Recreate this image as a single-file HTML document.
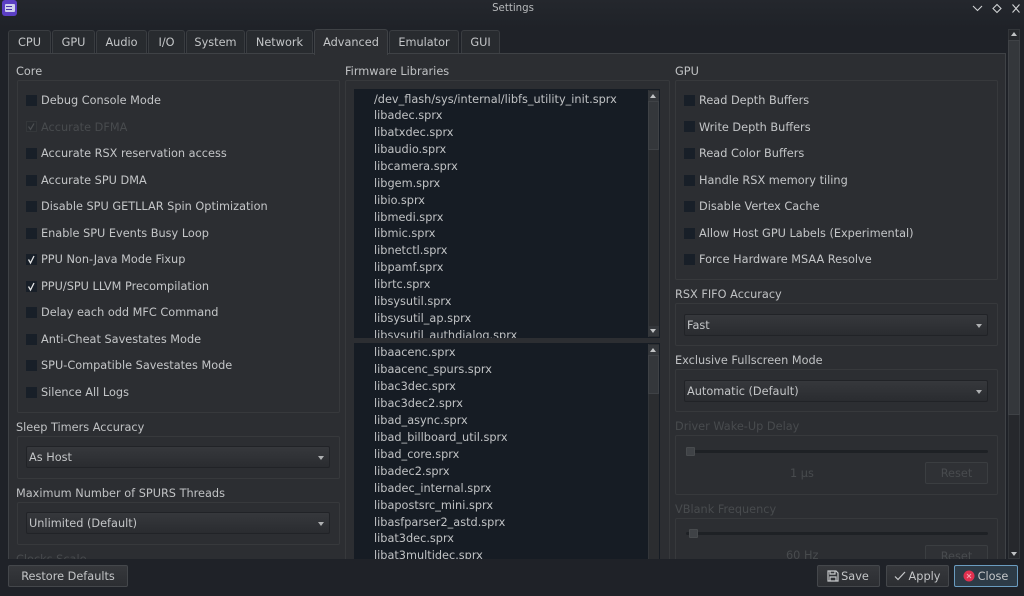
<!DOCTYPE html>
<html><head><meta charset="utf-8"><style>
html,body{margin:0;padding:0;width:1024px;height:596px;overflow:hidden;background:#1f2228}
body{font-family:"DejaVu Sans","Liberation Sans",sans-serif;font-size:11.3px;color:#c4c6c8;position:relative}
div,span{position:absolute;box-sizing:border-box;white-space:nowrap}
.tab{top:30px;height:24px;background:#282b2f;border:1px solid #3a3d41;border-bottom:none;border-radius:3px 3px 0 0;text-align:center;line-height:24px}
.gb{border:1px solid #37393c;border-radius:2px}
.l{line-height:16px;height:16px;margin-top:1px;color:#c0c2c4}
.cb{width:11px;height:11px;background:#181f28}
.cb svg{position:absolute;left:0;top:0}
.t{line-height:16px;height:16px;margin-top:1px;color:#c4c6c8}
.d{color:#484b4e !important}
.combo{height:22px;background:linear-gradient(#36383c,#2a2c30);border:1px solid #212327;border-radius:2px;line-height:21px;padding-left:2px;color:#c4c6c8}
.combo:after{content:"";position:absolute;right:5px;top:9px;border:3.5px solid transparent;border-top:4px solid #aeb0b2;border-bottom:0}
.list{background:#161c24;overflow:hidden}
.i{left:20px;line-height:17px;height:17px;color:#c0c2c4}
.sb{background:#2b2d30;border-left:1px solid #33363a}
.btn{height:22px;background:linear-gradient(#36383c,#2c2e32);border:1px solid #44474b;border-radius:2px;line-height:21px;color:#c4c6c8;text-align:center}
.dbtn{height:22px;background:#2f3135;border:1px solid #3b3e41;border-radius:2px;line-height:21px;color:#484b4e;text-align:center}
.up,.dn{width:0;height:0;border:3.5px solid transparent}
.up{border-bottom:4px solid #c0c2c4;border-top:0}
.dn{border-top:4px solid #c0c2c4;border-bottom:0}
.bx{width:11px;height:10px;background:#34373b}
</style></head><body>

<div style="left:0;top:0;width:1024px;height:29px;background:linear-gradient(#24272d,#1f2228)"></div>
<div style="left:2px;top:0;width:15px;height:16px;background:#5b3fc4;border-radius:3px"></div>
<div style="left:5px;top:4px;width:10px;height:8px;background:#cfd0ee;border-radius:1px"></div>
<div style="left:6px;top:6px;width:6px;height:1px;background:#4a35a8"></div>
<div style="left:6px;top:9px;width:6px;height:1px;background:#4a35a8"></div>
<div style="left:1px;top:1px;width:1024px;height:16px;line-height:16px;text-align:center;color:#b8babc;font-size:10.2px">Settings</div>
<svg style="position:absolute;left:970px;top:1px" width="54" height="16" fill="none" stroke="#d0d2d4" stroke-width="1.1"><path d="M3 5l4.500 4.500L12 5"/><path d="M27 3.500l4 4-4 4-4-4z"/><path d="M42.500 3.500l7 8M49.500 3.500l-7 8"/></svg>

<div class="tab" style="left:8px;width:43px">CPU</div>
<div class="tab" style="left:52px;width:43px">GPU</div>
<div class="tab" style="left:96px;width:51px">Audio</div>
<div class="tab" style="left:148px;width:37px">I/O</div>
<div class="tab" style="left:186px;width:59px">System</div>
<div class="tab" style="left:246px;width:67px">Network</div>
<div class="tab" style="left:389px;width:70px">Emulator</div>
<div class="tab" style="left:461px;width:39px">GUI</div>

<div style="left:8px;top:53px;width:998px;height:510px;background:#2c2e32;border:1px solid #3f4246"></div>
<div class="tab" style="left:314px;top:29px;width:74px;height:26px;background:#2c2e32;border-color:#3f4246;z-index:2;line-height:26px">Advanced</div>

<!-- outer scrollbar -->
<div style="left:1008px;top:29px;width:12px;height:530px;background:#26282c;border:1px solid #33363a"></div>
<div style="left:1008px;top:40px;width:12px;height:375px;background:#34373b;border:1px solid #3f4246"></div>
<div class="up" style="left:1010.500px;top:32px"></div>
<div class="dn" style="left:1010.500px;top:552px"></div>

<!-- Core -->
<div class="l" style="left:16px;top:63px">Core</div>
<div class="gb" style="left:17px;top:80px;width:323px;height:333px"></div>
<div class="cb" style="left:26px;top:95px"></div><div class="t" style="left:41px;top:92px">Debug Console Mode</div>
<div class="cb" style="left:26px;top:121px;background:#292c30;border:1px solid #34373a"><svg width="9" height="9" fill="none" stroke="#4c4f52" stroke-width="1.200"><path d="M1.500 4.500l2 3 3.500-6"/></svg></div><div class="t d" style="left:41px;top:119px">Accurate DFMA</div>
<div class="cb" style="left:26px;top:148px"></div><div class="t" style="left:41px;top:145px">Accurate RSX reservation access</div>
<div class="cb" style="left:26px;top:175px"></div><div class="t" style="left:41px;top:172px">Accurate SPU DMA</div>
<div class="cb" style="left:26px;top:201px"></div><div class="t" style="left:41px;top:198px">Disable SPU GETLLAR Spin Optimization</div>
<div class="cb" style="left:26px;top:228px"></div><div class="t" style="left:41px;top:225px">Enable SPU Events Busy Loop</div>
<div class="cb" style="left:26px;top:254px"><svg width="11" height="11" fill="none" stroke="#e4e5e6" stroke-width="1.300"><path d="M2.500 5.500l2 3.500 3.500-7"/></svg></div><div class="t" style="left:41px;top:251px">PPU Non-Java Mode Fixup</div>
<div class="cb" style="left:26px;top:281px"><svg width="11" height="11" fill="none" stroke="#e4e5e6" stroke-width="1.300"><path d="M2.500 5.500l2 3.500 3.500-7"/></svg></div><div class="t" style="left:41px;top:278px">PPU/SPU LLVM Precompilation</div>
<div class="cb" style="left:26px;top:307px"></div><div class="t" style="left:41px;top:304px">Delay each odd MFC Command</div>
<div class="cb" style="left:26px;top:334px"></div><div class="t" style="left:41px;top:331px">Anti-Cheat Savestates Mode</div>
<div class="cb" style="left:26px;top:360px"></div><div class="t" style="left:41px;top:357px">SPU-Compatible Savestates Mode</div>
<div class="cb" style="left:26px;top:387px"></div><div class="t" style="left:41px;top:384px">Silence All Logs</div>

<div class="l" style="left:16px;top:419px">Sleep Timers Accuracy</div>
<div class="gb" style="left:17px;top:436px;width:323px;height:43px"></div>
<div class="combo" style="left:26px;top:446px;width:304px">As Host</div>
<div class="l" style="left:16px;top:485px">Maximum Number of SPURS Threads</div>
<div class="gb" style="left:17px;top:502px;width:323px;height:43px"></div>
<div class="combo" style="left:26px;top:512px;width:304px">Unlimited (Default)</div>
<div class="l d" style="left:16px;top:551px">Clocks Scale</div>

<!-- Firmware -->
<div class="l" style="left:345px;top:63px">Firmware Libraries</div>
<div class="gb" style="left:345px;top:80px;width:325px;height:490px"></div>
<div class="list" style="left:354px;top:89px;width:306px;height:249px">
<div class="i" style="top:2px">/dev_flash/sys/internal/libfs_utility_init.sprx</div>
<div class="i" style="top:18px">libadec.sprx</div>
<div class="i" style="top:35px">libatxdec.sprx</div>
<div class="i" style="top:52px">libaudio.sprx</div>
<div class="i" style="top:69px">libcamera.sprx</div>
<div class="i" style="top:86px">libgem.sprx</div>
<div class="i" style="top:103px">libio.sprx</div>
<div class="i" style="top:120px">libmedi.sprx</div>
<div class="i" style="top:136px">libmic.sprx</div>
<div class="i" style="top:153px">libnetctl.sprx</div>
<div class="i" style="top:170px">libpamf.sprx</div>
<div class="i" style="top:187px">librtc.sprx</div>
<div class="i" style="top:204px">libsysutil.sprx</div>
<div class="i" style="top:221px">libsysutil_ap.sprx</div>
<div class="i" style="top:238px">libsysutil_authdialog.sprx</div>
<div class="sb" style="left:294px;top:1px;width:11px;height:247px"></div>
<div class="bx" style="left:294px;top:2px"></div>
<div class="bx" style="left:294px;top:237px"></div>
<div style="left:294px;top:12px;width:11px;height:49px;background:#34373b;border:1px solid #3f4246"></div>
<div class="up" style="left:296px;top:5px"></div>
<div class="dn" style="left:296px;top:240px"></div>
</div>
<div class="list" style="left:354px;top:343px;width:306px;height:217px">
<div class="i" style="top:1px">libaacenc.sprx</div>
<div class="i" style="top:18px">libaacenc_spurs.sprx</div>
<div class="i" style="top:35px">libac3dec.sprx</div>
<div class="i" style="top:52px">libac3dec2.sprx</div>
<div class="i" style="top:69px">libad_async.sprx</div>
<div class="i" style="top:86px">libad_billboard_util.sprx</div>
<div class="i" style="top:103px">libad_core.sprx</div>
<div class="i" style="top:120px">libadec2.sprx</div>
<div class="i" style="top:137px">libadec_internal.sprx</div>
<div class="i" style="top:154px">libapostsrc_mini.sprx</div>
<div class="i" style="top:171px">libasfparser2_astd.sprx</div>
<div class="i" style="top:187px">libat3dec.sprx</div>
<div class="i" style="top:204px">libat3multidec.sprx</div>
<div class="sb" style="left:294px;top:1px;width:11px;height:216px"></div>
<div class="bx" style="left:294px;top:2px"></div>
<div style="left:294px;top:12px;width:11px;height:39px;background:#34373b;border:1px solid #3f4246"></div>
<div class="up" style="left:296px;top:5px"></div>
</div>

<!-- GPU -->
<div class="l" style="left:675px;top:63px">GPU</div>
<div class="gb" style="left:675px;top:80px;width:323px;height:200px"></div>
<div class="cb" style="left:684px;top:95px"></div><div class="t" style="left:699px;top:92px">Read Depth Buffers</div>
<div class="cb" style="left:684px;top:121px"></div><div class="t" style="left:699px;top:119px">Write Depth Buffers</div>
<div class="cb" style="left:684px;top:148px"></div><div class="t" style="left:699px;top:145px">Read Color Buffers</div>
<div class="cb" style="left:684px;top:175px"></div><div class="t" style="left:699px;top:172px">Handle RSX memory tiling</div>
<div class="cb" style="left:684px;top:201px"></div><div class="t" style="left:699px;top:198px">Disable Vertex Cache</div>
<div class="cb" style="left:684px;top:228px"></div><div class="t" style="left:699px;top:225px">Allow Host GPU Labels (Experimental)</div>
<div class="cb" style="left:684px;top:254px"></div><div class="t" style="left:699px;top:251px">Force Hardware MSAA Resolve</div>

<div class="l" style="left:675px;top:286px">RSX FIFO Accuracy</div>
<div class="gb" style="left:675px;top:303px;width:323px;height:43px"></div>
<div class="combo" style="left:684px;top:314px;width:304px">Fast</div>
<div class="l" style="left:675px;top:352px">Exclusive Fullscreen Mode</div>
<div class="gb" style="left:675px;top:369px;width:323px;height:43px"></div>
<div class="combo" style="left:684px;top:380px;width:304px">Automatic (Default)</div>

<div class="l d" style="left:675px;top:418px">Driver Wake-Up Delay</div>
<div class="gb" style="left:675px;top:435px;width:323px;height:60px"></div>
<div style="left:686px;top:450px;width:302px;height:3px;background:#1e2125;border-radius:2px"></div>
<div style="left:686px;top:447px;width:9px;height:9px;background:#3f4246;border:1px solid #484b4e;border-radius:1px"></div>
<div class="t d" style="left:790px;top:465px">1 µs</div>
<div class="dbtn" style="left:925px;top:462px;width:63px">Reset</div>

<div class="l d" style="left:675px;top:501px">VBlank Frequency</div>
<div class="gb" style="left:675px;top:518px;width:323px;height:60px"></div>
<div style="left:686px;top:532px;width:302px;height:3px;background:#1e2125;border-radius:2px"></div>
<div style="left:689px;top:529px;width:9px;height:9px;background:#3f4246;border:1px solid #484b4e;border-radius:1px"></div>
<div class="t d" style="left:786px;top:547px">60 Hz</div>
<div class="dbtn" style="left:925px;top:545px;width:63px">Reset</div>

<!-- Bottom bar -->
<div style="left:0;top:559px;width:1024px;height:37px;background:#1f2228"></div>
<div class="btn" style="left:8px;top:565px;width:120px">Restore Defaults</div>
<div class="btn" style="left:817px;top:565px;width:63px;padding-left:13px">Save</div>
<svg style="position:absolute;left:827px;top:570px" width="12" height="12" fill="none" stroke="#c8cacc" stroke-width="1.200"><path d="M1 1h8l2 2v8H1z"/><path d="M3 1v3h5V1M3 11V7h6v4"/></svg>
<div class="btn" style="left:886px;top:565px;width:63px;padding-left:14px">Apply</div>
<svg style="position:absolute;left:894px;top:570px" width="12" height="12" fill="none" stroke="#c8cacc" stroke-width="1.200"><path d="M1 6.500l3 3 7-7.500"/></svg>
<div class="btn" style="left:954px;top:565px;width:64px;padding-left:14px;background:#2d3b47;border-color:#6a9cc0">Close</div>
<svg style="position:absolute;left:963px;top:570px" width="12" height="12"><circle cx="6" cy="6" r="5.500" fill="#e0304f"/><path d="M4 4l4 4M8 4l-4 4" stroke="#f4a0b0" stroke-width="1"/></svg>

</body></html>
